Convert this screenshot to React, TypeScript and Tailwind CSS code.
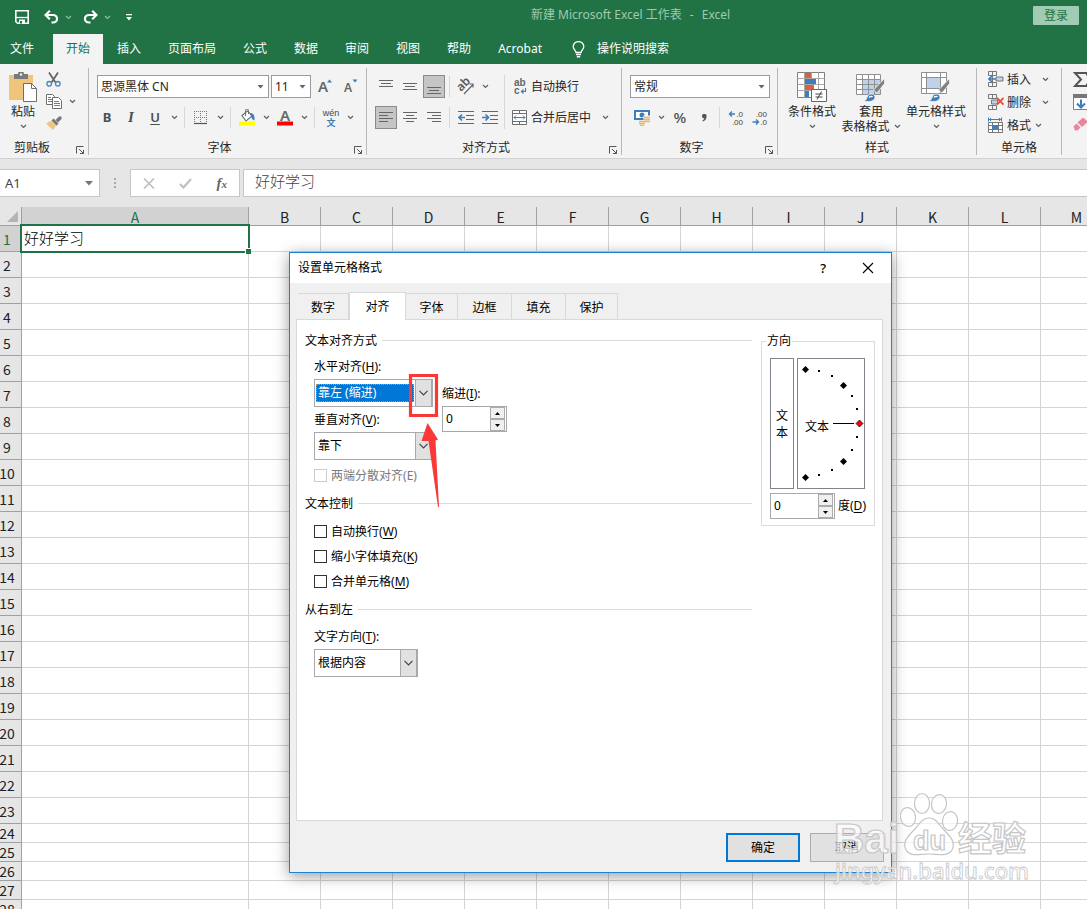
import React from 'react';

type Kids = { children?: React.ReactNode };

/* ---------- small shared pieces ---------- */

function Chevron({ color = '#5f5f5f' }: { color?: string }) {
  return (
    <svg width="7" height="5" viewBox="0 0 7 5" fill="none">
      <path d="M1 1l2.5 2.5L6 1" stroke={color} strokeWidth="1.2" />
    </svg>
  );
}

function Triangle({ color = '#666666' }: { color?: string }) {
  return (
    <svg width="7" height="4" viewBox="0 0 7 4">
      <path d="M0.5 0h6L3.5 3.6z" fill={color} />
    </svg>
  );
}

function DropButton({ label }: { label: string }) {
  return (
    <button aria-label={label} className="flex h-[22px] w-[14px] items-center justify-center">
      <Chevron />
    </button>
  );
}

function Tool({ label, active = false, children }: Kids & { label: string; active?: boolean }) {
  return (
    <button
      aria-label={label}
      className={
        active
          ? 'mx-px flex h-[23px] w-[22px] items-center justify-center border border-[#8a8a8a] bg-[#c5c5c5]'
          : 'flex h-[23px] w-6 items-center justify-center'
      }
    >
      {children}
    </button>
  );
}

function Rule() {
  return <span className="mr-1 ml-[3px] h-[21px] w-px bg-[#d8d8d8]" />;
}

function Launcher({ label }: { label: string }) {
  return (
    <button aria-label={label} className="flex h-[14px] w-4 items-end pl-1">
      <svg width="9" height="9" viewBox="0 0 9 9" fill="none" stroke="#555555">
        <path d="M0.5 7.500V0.500H7.500" />
        <path d="M3 3l4.500 4.500M7.500 4v3.500H4" />
      </svg>
    </button>
  );
}

function Group({
  title,
  launcher = true,
  width,
  labelPad = '',
  children,
}: Kids & { title: string; launcher?: boolean; width: string; labelPad?: string }) {
  return (
    <section className={`flex h-[87px] shrink-0 flex-col border-r border-[#b8b8b8] ${width}`}>
      <div className="h-[73px]">{children}</div>
      <div className="flex h-[14px] items-center">
        <h2 className={`flex-1 text-center text-[12px] leading-[14px] text-[#262626] ${labelPad}`}>{title}</h2>
        {launcher && <Launcher label={title} />}
      </div>
    </section>
  );
}

function RibbonSelect({ label, value, width }: { label: string; value: string; width: string }) {
  return (
    <div className={`flex h-[23px] items-center border border-[#9b9b9b] bg-white pr-1 ${width}`}>
      <select
        aria-label={label}
        className="h-[21px] min-w-0 flex-1 appearance-none bg-transparent pl-[3px] text-[12px] leading-[21px] text-[#262626] outline-none"
      >
        <option>{value}</option>
      </select>
      <Triangle />
    </div>
  );
}

/* ---------- title bar icons ---------- */

function SaveIcon() {
  return (
    <svg width="14" height="14" viewBox="0 0 14 14" fill="none">
      <path d="M0.800 0.800h12.400v12.400H2.500L0.800 11.500z" stroke="#fff" strokeWidth="1.600" />
      <path d="M1 7.500h12" stroke="#fff" strokeWidth="1.300" />
      <path d="M4 9.500h6V14H4z" fill="#fff" />
      <path d="M5 11h2v2.500H5z" fill="#217346" />
    </svg>
  );
}

function UndoIcon({ flip = false }: { flip?: boolean }) {
  return (
    <svg width="15" height="14" viewBox="0 0 15 14" fill="none">
      <g transform={flip ? 'translate(15 0) scale(-1 1)' : undefined}>
        <path d="M1.500 5H9a4 3.700 0 0 1 0 7.500H7.500" stroke="#fff" strokeWidth="2.200" />
        <path d="M5.800 0.800L1.600 5l4.200 4.200" stroke="#fff" strokeWidth="2.200" />
      </g>
    </svg>
  );
}

function BulbIcon() {
  return (
    <svg width="13" height="17" viewBox="0 0 13 17" fill="none" stroke="#fff">
      <path d="M4 11.500C4 9.500 1.200 8.500 1.200 5.600a5.300 5 0 0 1 10.600 0c0 2.900-2.800 3.900-2.800 5.900z" strokeWidth="1.300" />
      <path d="M4 13.500h5M4.800 15.800h3.400" strokeWidth="1.400" />
    </svg>
  );
}

/* ---------- ribbon icons ---------- */

function PasteIcon() {
  return (
    <svg width="28" height="30" viewBox="0 0 28 30">
      <path d="M0 3h24v25H0z" fill="#efc57b" />
      <path d="M5 2h4a3 3 0 0 1 6 0h4v5H5z" fill="#7a7a7a" />
      <circle cx="12" cy="2.500" r="1.200" fill="#f3f3f3" />
      <path d="M14.500 11.500h8l5 5v13h-13z" fill="#fff" stroke="#6e6e6e" />
      <path d="M22.500 11.500v5h5" fill="none" stroke="#6e6e6e" />
    </svg>
  );
}

function CutIcon() {
  return (
    <svg width="15" height="15" viewBox="0 0 15 15" fill="none">
      <path d="M3 0.500l6.500 10M12 0.500l-6.500 10" stroke="#666666" strokeWidth="1.800" />
      <circle cx="3.200" cy="11.800" r="2.300" stroke="#4a82bd" strokeWidth="1.300" />
      <circle cx="11.800" cy="11.800" r="2.300" stroke="#4a82bd" strokeWidth="1.300" />
    </svg>
  );
}

function CopyIcon() {
  return (
    <svg width="16" height="15" viewBox="0 0 16 15" fill="none">
      <path d="M0.500 0.500h6l2 2v8h-8z" fill="#fff" stroke="#6e6e6e" />
      <path d="M2 3.500h3M2 5.500h4M2 7.500h4" stroke="#4a82bd" />
      <path d="M6.500 3.500h6l3 3v8h-9z" fill="#fff" stroke="#6e6e6e" />
      <path d="M8 7.500h5M8 9.500h6M8 11.500h6" stroke="#4a82bd" />
    </svg>
  );
}

function BrushIcon() {
  return (
    <svg width="16" height="14" viewBox="0 0 16 14">
      <path d="M0 7.500l5-2.700 5 5L7 14z" fill="#efc57b" />
      <path d="M5.500 4.500l2-2 5 5-2 2.200z" fill="#777777" />
      <path d="M9.500 4L13 0.500h2.500V3L12 6.500z" fill="#777777" />
    </svg>
  );
}

function GrowIcon({ small = false }: { small?: boolean }) {
  return (
    <svg width="14" height="15" viewBox="0 0 14 15" className="overflow-visible">
      <text x="0" y="13" fontSize={small ? 12 : 15} className="font-['Noto_Sans']" fontWeight="600" fill="#666666">
        A
      </text>
      <path d={small ? 'M8.500 0.500h5L11 3.500z' : 'M9 3.500h5L11.500 0.500z'} fill="#3f7cbc" />
    </svg>
  );
}

function BorderIcon() {
  return (
    <svg width="14" height="14" viewBox="0 0 14 14" fill="none">
      <path d="M0 0.500h13M0 6.500h13M0.500 0v12M6.500 0v12M12.500 0v12" stroke="#777777" strokeDasharray="1 1" />
      <path d="M0 12.500h13" stroke="#555555" strokeWidth="1.200" />
    </svg>
  );
}

function FillIcon() {
  return (
    <svg width="17" height="17" viewBox="0 0 17 17" fill="none">
      <path d="M3 6.500l5.500-4.500 4.500 5-6 5z" fill="#fff" stroke="#6e6e6e" strokeWidth="1.100" />
      <path d="M6.500 7V1.500a1.500 1.500 0 0 1 3 0V5" stroke="#6e6e6e" />
      <path d="M11 4c3.500 0 4.800 2.500 4.500 7.500l-2.500-1.500z" fill="#3f7cbc" />
      <path d="M0 12.500h16v4H0z" fill="#ffff00" />
    </svg>
  );
}

function FontColorIcon() {
  return (
    <svg width="16" height="17" viewBox="0 0 16 17" className="overflow-visible">
      <path d="M0 12.500h16v4H0z" fill="#ff0000" />
      <text x="3" y="11.500" fontSize="15" fontWeight="600" className="font-['Noto_Sans']" fill="#666666">
        A
      </text>
    </svg>
  );
}

function PinyinIcon() {
  return (
    <svg width="18" height="18" viewBox="0 0 18 18" className="overflow-visible">
      <text x="9" y="6.500" textAnchor="middle" fontSize="9" className="font-['Liberation_Sans']" fill="#444444">
        wén
      </text>
      <text x="9" y="17" textAnchor="middle" fontSize="9" fontWeight="700" className="font-['Noto_Sans_CJK_SC']" fill="#3f7cbc">
        文
      </text>
    </svg>
  );
}

function LinesIcon({ d }: { d: string }) {
  return (
    <svg width="14" height="14" viewBox="0 0 14 14" fill="none">
      <path d={d} stroke="#666666" />
    </svg>
  );
}

function OrientIcon() {
  return (
    <svg width="18" height="17" viewBox="0 0 18 17" fill="none" className="overflow-visible">
      <text x="1" y="11" fontSize="12" fontWeight="600" transform="rotate(-45 6 9)" className="font-['Noto_Sans']" fill="#5a5a5a">
        ab
      </text>
      <path d="M7 16L16 6.500M12.500 6h3.500v3.500" stroke="#666666" strokeWidth="1.200" />
    </svg>
  );
}

function IndentIcon({ inward = false }: { inward?: boolean }) {
  return (
    <svg width="16" height="14" viewBox="0 0 16 14" fill="none">
      <path d="M0 0.500h16M8 4.500h8M8 8.500h8M0 12.500h16" stroke="#666666" />
      {inward ? (
        <path d="M0 6.500h6M3.500 3.500l3 3-3 3" stroke="#3f7cbc" strokeWidth="1.700" />
      ) : (
        <path d="M7 6.500H1M4 3.500l-3 3 3 3" stroke="#3f7cbc" strokeWidth="1.700" />
      )}
    </svg>
  );
}

function WrapIcon() {
  return (
    <svg width="14" height="16" viewBox="0 0 14 16" fill="none" className="overflow-visible">
      <text x="0" y="6.500" fontSize="10" fontWeight="700" className="font-['Liberation_Sans']" fill="#666666">
        ab
      </text>
      <text x="0" y="15" fontSize="10" fontWeight="700" className="font-['Liberation_Sans']" fill="#666666">
        c
      </text>
      <path d="M11.500 9v3.500H7.500M9.500 10.500l-2 2 2 2" stroke="#3f7cbc" strokeWidth="1.200" />
    </svg>
  );
}

function MergeIcon() {
  return (
    <svg width="15" height="15" viewBox="0 0 15 15" fill="none">
      <path d="M0.500 0.500h14v14h-14zM0.500 3.500h14M0.500 11.500h14M7.500 0.500v3M7.500 11.500v3" stroke="#6e6e6e" fill="#fff" />
      <path d="M2 7.500h11M4 5.500l-2 2 2 2M11 5.500l2 2-2 2" stroke="#3f7cbc" />
    </svg>
  );
}

function CurrencyIcon() {
  return (
    <svg width="17" height="16" viewBox="0 0 17 16" fill="none">
      <path d="M1 1h14v8H1z" fill="#fff" stroke="#3f7cbc" strokeWidth="2" />
      <circle cx="8" cy="5" r="2.500" fill="#3f7cbc" />
      <path d="M9.500 5.500h7v7h-4v3.500H4v-5h5.500z" fill="#f3f3f3" />
      <path d="M10 7.500h6M10 9.500h6M10 11.500h6M5 11.500h6M5 13.500h6M6 15.500h4" stroke="#e8b968" strokeWidth="1.500" />
    </svg>
  );
}

function DecimalIcon({ less = false }: { less?: boolean }) {
  return (
    <svg width="16" height="16" viewBox="0 0 16 16" fill="none" className="overflow-visible">
      <text x="15" y="6.500" textAnchor="end" fontSize="8" className="font-['Liberation_Sans']" fill="#444444">
        {less ? '.00' : '.0'}
      </text>
      <text x="15" y="15" textAnchor="end" fontSize="8" className="font-['Liberation_Sans']" fill="#444444">
        {less ? '.0' : '.00'}
      </text>
      {less ? (
        <path d="M0.500 12h6M4 9.500L6.500 12 4 14.500" stroke="#3f7cbc" strokeWidth="1.400" />
      ) : (
        <path d="M7 4H1.500M4 1.500L1.500 4 4 6.500" stroke="#3f7cbc" strokeWidth="1.400" />
      )}
    </svg>
  );
}

function ConditionalIcon() {
  return (
    <svg width="31" height="31" viewBox="0 0 31 31" fill="none">
      <path d="M0.500 0.500h27v25h-27z" fill="#fff" stroke="#808080" />
      <path d="M0.500 6.500h27M0.500 12.500h27M0.500 18.500h27M7.500 0.500v25M14.500 0.500v25M21.500 0.500v25" stroke="#a8a8a8" />
      <path d="M8 1h6v5H8zM8 13h9v5H8z" fill="#d8623f" />
      <path d="M8 7h11v5H8zM8 19h4v6H8z" fill="#3f7cbc" />
      <path d="M14.500 17.500h15v12h-15z" fill="#fff" stroke="#666666" />
      <path d="M18.500 22h7M18.500 25h7M24.500 19.500l-4.500 8" stroke="#444444" />
    </svg>
  );
}

function BrushOverlay() {
  return (
    <g>
      <path d="M28.500 6.500v5L21 21l-3.500-3z" fill="#808080" stroke="#f3f3f3" strokeWidth="0.800" />
      <path d="M8 29c3-1 2.500-3.500 4-5.500 2-2.700 7-1.500 7 1.500 0 4-5.500 5.500-11 4z" fill="#3f7cbc" stroke="#f3f3f3" strokeWidth="0.800" />
      <path d="M13 25.500c1.500-1.500 3-1.200 3.500-0.500" stroke="#fff" strokeWidth="1.300" fill="none" />
    </g>
  );
}

function TableStyleIcon() {
  return (
    <svg width="30" height="30" viewBox="0 0 30 30" fill="none">
      <path d="M0.500 2.500h24v20h-24z" fill="#fff" />
      <path d="M6 8h18v14H6z" fill="#bfd2e9" />
      <path d="M0.500 2.500h24v20h-24zM0.500 7.500h24M0.500 12.500h24M0.500 17.500h24M6.500 2.500v20M12.500 2.500v20M18.500 2.500v20" stroke="#909090" />
      <BrushOverlay />
    </svg>
  );
}

function CellStyleIcon() {
  return (
    <svg width="30" height="30" viewBox="0 0 30 30" fill="none">
      <path d="M0.500 0.500h25v21h-25z" fill="#fff" />
      <path d="M0.500 0.500h25v21h-25zM0.500 5.500h25M0.500 16.500h25M5.500 0.500v21M19.500 0.500v21" stroke="#909090" />
      <path d="M6 6h13v10H6z" fill="#bfd2e9" />
      <BrushOverlay />
    </svg>
  );
}

function InsertCellsIcon() {
  return (
    <svg width="16" height="17" viewBox="0 0 16 17" fill="none">
      <path d="M0.500 0.500h8v4h-8zM4.500 0.500v4M0.500 11.500h8v4h-8zM4.500 11.500v4M4.500 4.500v7" stroke="#777777" />
      <path d="M8 6h7v4H8z" fill="#bfd2e9" stroke="#777777" />
      <path d="M8 8H1M4 5L1 8l3 3" stroke="#3f7cbc" strokeWidth="1.700" />
    </svg>
  );
}

function DeleteCellsIcon() {
  return (
    <svg width="16" height="17" viewBox="0 0 16 17" fill="none">
      <path d="M0.500 0.500h8v4h-8zM4.500 0.500v4M0.500 11.500h8v4h-8zM4.500 11.500v4" stroke="#777777" />
      <path d="M3.500 6h6v4h-6z" fill="#bfd2e9" stroke="#777777" />
      <path d="M9 4l6.500 6.500M15.500 4L9 10.500" stroke="#e0533a" strokeWidth="1.800" />
    </svg>
  );
}

function FormatCellsIcon() {
  return (
    <svg width="16" height="17" viewBox="0 0 16 17" fill="none">
      <path d="M1 2.500h12M0.500 0.500v4M13.500 0.500v4M3 1L1.500 2.500 3 4M11 1l1.500 1.500L11 4" stroke="#3f7cbc" />
      <path d="M0.500 5.500h14v10h-14zM0.500 8.500h14M0.500 12.500h14M4.500 5.500v10M10.500 5.500v10" fill="#fff" stroke="#777777" />
      <path d="M4 8h6v4H4z" fill="#3f7cbc" />
    </svg>
  );
}

/* ---------- header ---------- */

const TABS = ['开始', '插入', '页面布局', '公式', '数据', '审阅', '视图', '帮助', 'Acrobat'];

function Header() {
  return (
    <header className="bg-[#217346] text-white">
      <div className="flex h-[34px] items-center pr-2 pl-[15px]">
        <button aria-label="保存" className="w-[29px]">
          <SaveIcon />
        </button>
        <button aria-label="撤消">
          <UndoIcon />
        </button>
        <button aria-label="撤消列表" className="ml-[6px] w-[18px]">
          <Chevron color="#8fbfa4" />
        </button>
        <button aria-label="恢复">
          <UndoIcon flip />
        </button>
        <button aria-label="恢复列表" className="ml-[6px] w-[22px]">
          <Chevron color="#8fbfa4" />
        </button>
        <button aria-label="自定义快速访问工具栏">
          <svg width="6" height="7" viewBox="0 0 6 7">
            <path d="M0 0h6v1.300H0zM0 3h6L3 6.500z" fill="#fff" />
          </svg>
        </button>
        <h1 className="flex flex-1 justify-center gap-2 pb-1 pl-[96px] text-[12px] leading-[18px] text-[#9dcbb0]">
          <span>新建 Microsoft Excel 工作表</span>
          <span>-</span>
          <span>Excel</span>
        </h1>
        <button className="mb-[3px] h-[19px] w-[46px] rounded-[1px] bg-[#9fccb2] text-[12px] leading-[18px] text-[#217346]">
          登录
        </button>
      </div>
      <nav className="flex h-[30px] items-stretch gap-px text-[12px] leading-[28px]">
        <button className="w-[52px] pr-2 text-center">文件</button>
        {TABS.map((t) => (
          <button key={t} className={t === '开始' ? 'bg-[#f3f3f3] px-[13px] text-[#217346]' : 'px-[13px]'}>
            {t}
          </button>
        ))}
        <button className="ml-4 flex items-center gap-3">
          <BulbIcon />
          操作说明搜索
        </button>
      </nav>
    </header>
  );
}

/* ---------- ribbon ---------- */

function BigButton({ icon, lines, width }: { icon: React.ReactNode; lines: [string, string?]; width: string }) {
  return (
    <button className={`flex flex-col items-center pt-1 text-[12px] leading-[15px] text-[#262626] ${width}`}>
      <span className="flex h-8 items-start">{icon}</span>
      <span className="whitespace-nowrap">{lines[0]}</span>
      <span className="flex h-[15px] items-center gap-1 whitespace-nowrap">
        {lines[1]}
        <Chevron />
      </span>
    </button>
  );
}

function CellAction({ icon, text, gap }: { icon: React.ReactNode; text: string; gap: string }) {
  return (
    <button className={`flex h-[23px] items-center text-[12px] leading-[22px] text-[#262626] ${gap}`}>
      <span className="flex items-center gap-[3px]">
        {icon}
        {text}
      </span>
      <Chevron />
    </button>
  );
}

function Ribbon() {
  return (
    <div className="flex h-[95px] items-start overflow-hidden border-b border-[#d2d2d2] bg-[#f3f3f3] pt-1">
      <Group title="剪贴板" width="w-[89px]" labelPad="pr-2">
        <div className="flex">
          <BigButton icon={<PasteIcon />} lines={['粘贴']} width="w-[46px]" />
          <div className="flex flex-col">
            <button aria-label="剪切" className="flex h-[22px] items-center">
              <CutIcon />
            </button>
            <div className="flex h-[22px] items-center">
              <button aria-label="复制" className="w-[19px]">
                <CopyIcon />
              </button>
              <DropButton label="复制选项" />
            </div>
            <button aria-label="格式刷" className="flex h-[22px] items-center">
              <BrushIcon />
            </button>
          </div>
        </div>
      </Group>

      <Group title="字体" width="w-[278px]">
        <div className="flex flex-col gap-2 pt-[7px]">
          <div className="flex items-center gap-[2px] pl-2">
            <RibbonSelect label="字体" value="思源黑体 CN" width="w-[172px]" />
            <RibbonSelect label="字号" value="11" width="w-[40px]" />
            <Tool label="增大字号">
              <GrowIcon />
            </Tool>
            <Tool label="减小字号">
              <GrowIcon small />
            </Tool>
          </div>
          <div className="flex items-center pl-[6px] text-[13px] text-[#505050]">
            <Tool label="加粗">
              <b>B</b>
            </Tool>
            <Tool label="倾斜">
              <i className="font-['Liberation_Serif'] text-[15px] font-bold">I</i>
            </Tool>
            <Tool label="下划线">
              <u className="font-semibold underline-offset-2">U</u>
            </Tool>
            <DropButton label="下划线样式" />
            <Rule />
            <Tool label="边框">
              <BorderIcon />
            </Tool>
            <DropButton label="边框选项" />
            <Rule />
            <Tool label="填充颜色">
              <FillIcon />
            </Tool>
            <DropButton label="填充颜色选项" />
            <Tool label="字体颜色">
              <FontColorIcon />
            </Tool>
            <DropButton label="字体颜色选项" />
            <Rule />
            <Tool label="拼音">
              <PinyinIcon />
            </Tool>
            <DropButton label="拼音选项" />
          </div>
        </div>
      </Group>

      <Group title="对齐方式" width="w-[255px]">
        <div className="flex pt-[7px] pl-[7px] text-[12px] text-[#262626]">
          <div className="flex flex-col gap-2">
            <div className="flex items-center">
              <Tool label="顶端对齐">
                <LinesIcon d="M0 0.500h14M2 3.500h10M0 6.500h14" />
              </Tool>
              <Tool label="垂直居中">
                <LinesIcon d="M0 3.500h14M2 6.500h10M0 9.500h14" />
              </Tool>
              <Tool label="底端对齐" active>
                <LinesIcon d="M0 7.500h14M2 10.500h10M0 13.500h14" />
              </Tool>
              <Rule />
              <Tool label="方向">
                <OrientIcon />
              </Tool>
              <DropButton label="方向选项" />
            </div>
            <div className="flex items-center">
              <Tool label="左对齐" active>
                <LinesIcon d="M0 1.500h14M0 4.500h9M0 7.500h14M0 10.500h9" />
              </Tool>
              <Tool label="居中">
                <LinesIcon d="M0 1.500h14M3 4.500h8M0 7.500h14M3 10.500h8" />
              </Tool>
              <Tool label="右对齐">
                <LinesIcon d="M0 1.500h14M5 4.500h9M0 7.500h14M5 10.500h9" />
              </Tool>
              <Rule />
              <Tool label="减少缩进量">
                <IndentIcon />
              </Tool>
              <Tool label="增加缩进量">
                <IndentIcon inward />
              </Tool>
            </div>
          </div>
          <span className="mr-[7px] ml-[2px] h-[54px] w-px bg-[#d8d8d8]" />
          <div className="flex flex-col gap-2">
            <button className="flex h-[23px] items-center gap-[3px] pl-[2px]">
              <WrapIcon />
              自动换行
            </button>
            <div className="flex h-[23px] items-center gap-[7px]">
              <button className="flex items-center gap-[4px]">
                <MergeIcon />
                合并后居中
              </button>
              <DropButton label="合并选项" />
            </div>
          </div>
        </div>
      </Group>

      <Group title="数字" width="w-[156px]">
        <div className="flex flex-col gap-2 pt-[7px] pl-2">
          <RibbonSelect label="数字格式" value="常规" width="w-[140px]" />
          <div className="flex items-center text-[#505050]">
            <Tool label="会计数字格式">
              <CurrencyIcon />
            </Tool>
            <DropButton label="会计数字格式选项" />
            <Tool label="百分比样式">
              <span className="text-[15px] font-medium">%</span>
            </Tool>
            <Tool label="千位分隔样式">
              <svg width="5" height="8" viewBox="0 0 5 8">
                <path d="M0 2.200A2.200 2.200 0 0 1 4.600 2C4.600 5 3 7 0.800 7.500L0.500 6.500C1.500 6 2.200 5.200 2.300 4.300 1 4.400 0 3.500 0 2.200z" fill="#555555" />
              </svg>
            </Tool>
            <Rule />
            <Tool label="增加小数位数">
              <DecimalIcon />
            </Tool>
            <Tool label="减少小数位数">
              <DecimalIcon less />
            </Tool>
          </div>
        </div>
      </Group>

      <Group title="样式" width="w-[199px]" launcher={false}>
        <div className="flex pl-[5px]">
          <BigButton icon={<ConditionalIcon />} lines={['条件格式']} width="w-[58px]" />
          <BigButton icon={<TableStyleIcon />} lines={['套用', '表格格式']} width="w-[60px]" />
          <BigButton icon={<CellStyleIcon />} lines={['单元格样式']} width="w-[70px]" />
        </div>
      </Group>

      <Group title="单元格" width="w-[85px]" launcher={false}>
        <div className="flex flex-col pl-[11px]">
          <CellAction icon={<InsertCellsIcon />} text="插入" gap="gap-[11px]" />
          <CellAction icon={<DeleteCellsIcon />} text="删除" gap="gap-[11px]" />
          <CellAction icon={<FormatCellsIcon />} text="格式" gap="gap-1" />
        </div>
      </Group>

      <div className="flex shrink-0 flex-col pl-[11px]">
        <button aria-label="自动求和" className="flex h-[22px] items-center">
          <svg width="16" height="15" viewBox="0 0 16 15" fill="none">
            <path d="M14 3.500V1H2l6 6.500L2 14h12v-2.500" stroke="#555555" strokeWidth="2" />
          </svg>
        </button>
        <button aria-label="填充" className="flex h-[24px] items-center">
          <svg width="16" height="16" viewBox="0 0 16 16" fill="none">
            <path d="M0.500 0.500h15v15H0.500z" fill="#fff" stroke="#808080" />
            <path d="M0 0h16v4H0z" fill="#777777" />
            <path d="M8 5.500v8M4 9.500l4 4 4-4" stroke="#3f7cbc" strokeWidth="2" />
          </svg>
        </button>
        <button aria-label="清除" className="flex h-[20px] items-center">
          <svg width="16" height="14" viewBox="0 0 16 14">
            <path d="M0.500 9.500l3-3 4 4-3 3H2z" fill="#e8879c" />
            <path d="M4.500 5.500L10 0.500l5 4-6 5.500z" fill="#e8879c" />
          </svg>
        </button>
      </div>
    </div>
  );
}

/* ---------- formula bar ---------- */

function FormulaBar() {
  return (
    <div className="flex h-[48px] items-start bg-[#e6e6e6] pt-[10px]">
      <div className="flex h-[28px] w-[100px] items-center border border-l-0 border-[#c6c6c6] bg-white pr-[6px]">
        <input
          aria-label="名称框"
          defaultValue="A1"
          className="min-w-0 flex-1 bg-transparent pt-[2px] pl-[5px] text-[13px] text-[#444444] outline-none"
        />
        <svg width="8" height="5" viewBox="0 0 8 5">
          <path d="M0 0h8L4 4.500z" fill="#777777" />
        </svg>
      </div>
      <span className="flex h-[28px] w-[30px] items-center justify-center">
        <svg width="2" height="10" viewBox="0 0 2 10" fill="#a8a8a8">
          <path d="M0 0h2v2H0zM0 4h2v2H0zM0 8h2v2H0z" />
        </svg>
      </span>
      <div className="flex h-[28px] w-[110px] items-center justify-around border border-[#c6c6c6] bg-white">
        <button aria-label="取消">
          <svg width="12" height="11" viewBox="0 0 12 11" fill="none">
            <path d="M1 0.500l10 10M11 0.500l-10 10" stroke="#c0c0c0" strokeWidth="1.700" />
          </svg>
        </button>
        <button aria-label="输入">
          <svg width="13" height="11" viewBox="0 0 13 11" fill="none">
            <path d="M1 6l3.500 3.500L12 1" stroke="#c0c0c0" strokeWidth="2.200" />
          </svg>
        </button>
        <button aria-label="插入函数" className="font-['Liberation_Serif'] text-[15px] leading-4 font-bold text-[#666666] italic">
          f<span className="text-[11px]">x</span>
        </button>
      </div>
      <input
        aria-label="编辑栏"
        defaultValue="好好学习"
        className="ml-[3px] h-[28px] min-w-0 flex-1 border border-r-0 border-[#c6c6c6] bg-white pb-[5px] pl-[11px] font-['Noto_Sans_CJK_SC',sans-serif] text-[15px] font-light text-[#444444] outline-none"
      />
    </div>
  );
}

/* ---------- sheet ---------- */

const COLUMNS = ['A', 'B', 'C', 'D', 'E', 'F', 'G', 'H', 'I', 'J', 'K', 'L', 'M'];
const ROWS = Array.from({ length: 28 }, (_, i) => i + 1);

function Sheet() {
  return (
    <div className="flex-1 overflow-hidden bg-white">
      <table className="w-[1113px] table-fixed border-separate border-spacing-0 font-['Noto_Sans_CJK_SC',sans-serif]">
        <colgroup>
          <col className="w-[22px]" />
          {COLUMNS.map((c) => (
            <col key={c} className={c === 'A' ? 'w-[227px]' : 'w-[72px]'} />
          ))}
        </colgroup>
        <thead>
          <tr className="h-[19px] text-[14px] leading-4">
            <th className="border-r border-b border-[#a0a0a0] bg-[#e6e6e6] p-0">
              <svg width="11" height="11" viewBox="0 0 11 11" className="ml-[7px]">
                <path d="M11 0v11H0z" fill="#b4b4b4" />
              </svg>
            </th>
            {COLUMNS.map((c) => (
              <th
                key={c}
                className={
                  c === 'A'
                    ? 'border-r border-b border-[#a0a0a0] bg-[#d2d2d2] p-0 pt-[2px] font-normal text-[#217346]'
                    : 'border-r border-b border-[#a0a0a0] bg-[#e6e6e6] p-0 pt-[2px] font-normal text-[#222222]'
                }
              >
                {c}
              </th>
            ))}
          </tr>
        </thead>
        <tbody>
          {ROWS.map((r) => (
            <tr key={r} className={r < 24 ? 'h-[26px]' : 'h-[19px]'}>
              <th
                className={
                  r === 1
                    ? 'border-r border-b border-[#a0a0a0] bg-[#d2d2d2] p-0 pr-[7px] text-[14px] leading-[18px] font-normal text-[#217346]'
                    : 'border-r border-b border-[#a0a0a0] bg-[#e6e6e6] p-0 pr-[7px] text-[14px] leading-[18px] font-normal text-[#222222]'
                }
              >
                <span className="flex justify-center">{r}</span>
              </th>
              {COLUMNS.map((c) =>
                r === 1 && c === 'A' ? (
                  <td key={c} className="relative p-0 pb-[2px] pl-[2px] text-[15px] leading-[22px] font-light text-black">
                    好好学习
                    <span className="absolute -top-[2px] -right-px -bottom-px -left-[2px] border-2 border-[#217346]" />
                    <span className="absolute -right-[2px] -bottom-[2px] size-[6px] border-t border-l border-white bg-[#217346]" />
                  </td>
                ) : (
                  <td key={c} className="border-r border-b border-[#d4d4d4] p-0" />
                ),
              )}
            </tr>
          ))}
        </tbody>
      </table>
    </div>
  );
}

/* ---------- dialog ---------- */

function Key({ children }: Kids) {
  return <span className="underline underline-offset-2">{children}</span>;
}

function Heading({ children, top = '' }: Kids & { top?: string }) {
  return (
    <div className={`flex h-5 items-center gap-[5px] ${top}`}>
      <h3>{children}</h3>
      <span className="mb-px h-px flex-1 bg-[#dcdcdc]" />
    </div>
  );
}

function Combo({ id, value, width, active = false }: { id: string; value: string; width: string; active?: boolean }) {
  return (
    <div className={`flex h-7 items-center border border-[#a9a9ad] bg-white ${width}`}>
      <select
        id={id}
        className={
          active
            ? 'mr-px ml-px h-[18px] min-w-0 flex-1 appearance-none border border-dotted border-[#ff8728] bg-[#0078d7] pl-px text-[12px] leading-4 text-white outline-none'
            : 'h-[26px] min-w-0 flex-1 appearance-none pl-[3px] text-[12px] leading-[26px] outline-none'
        }
      >
        <option>{value}</option>
      </select>
      <span className="flex h-[26px] w-[17px] items-center justify-center border-r border-l border-[#a9a9ad] bg-[#e1e1e1]">
        <svg width="9" height="6" viewBox="0 0 9 6" fill="none">
          <path d="M0.500 0.800l4 4 4-4" stroke="#444444" strokeWidth="1.200" />
        </svg>
      </span>
    </div>
  );
}

function Spinner({ id }: { id: string }) {
  const part = 'flex h-3 w-[15px] items-center justify-center border border-[#acacac] bg-[#f0f0f0]';
  return (
    <div className="flex h-[26px] w-[65px] items-center border border-[#a9a9ad] bg-white pr-px">
      <input id={id} defaultValue="0" className="h-6 min-w-0 flex-1 pb-[2px] pl-[3px] text-[12px] outline-none" />
      <span className="flex flex-col">
        <button aria-label="增加" className={part}>
          <svg width="5" height="3" viewBox="0 0 5 3">
            <path d="M0 3h5L2.500 0z" fill="#000" />
          </svg>
        </button>
        <button aria-label="减少" className={part}>
          <svg width="5" height="3" viewBox="0 0 5 3">
            <path d="M0 0h5L2.500 3z" fill="#000" />
          </svg>
        </button>
      </span>
    </div>
  );
}

function Tick({ text, k, underline = true, disabled = false }: { text: string; k: string; underline?: boolean; disabled?: boolean }) {
  return (
    <label className={disabled ? 'flex h-4 items-center gap-1 text-[#7a7a7a]' : 'flex h-4 items-center gap-1'}>
      <input
        type="checkbox"
        disabled={disabled}
        className={
          disabled
            ? 'size-[13px] appearance-none border border-[#cccccc] bg-white'
            : 'size-[13px] appearance-none border border-[#333333] bg-white'
        }
      />
      <span className="pt-px">
        {text}({underline ? <Key>{k}</Key> : k})
      </span>
    </label>
  );
}

const BIG_MARKS = [
  [8.5, 11.5],
  [46.5, 27.5],
  [46.5, 103.5],
  [8.5, 119.5],
];
const SMALL_MARKS = [
  [22, 13],
  [35, 18],
  [55, 38],
  [60, 51],
  [60, 79],
  [55, 92],
  [35, 112],
  [22, 117],
];

function Dial() {
  return (
    <div className="h-[131px] w-[68px] border border-[#82828c]">
      <svg width="66" height="129" viewBox="1 1 66 129">
        {BIG_MARKS.map(([x, y]) => (
          <path key={`${x}-${y}`} d={`M${x - 3.5} ${y}l3.500-3.500 3.500 3.500-3.500 3.500z`} fill="#000" />
        ))}
        {SMALL_MARKS.map(([x, y]) => (
          <rect key={`${x}-${y}`} x={x - 1} y={y - 1} width="2" height="2" fill="#000" />
        ))}
        <path d="M36 65.500h21" stroke="#000" />
        <path d="M59 65.500l3.500-3.500 3.500 3.500-3.500 3.500z" fill="#ff0000" stroke="#000" strokeWidth="0.700" />
        <text x="8" y="73" fontSize="12" fill="#000">
          文本
        </text>
      </svg>
    </div>
  );
}

const DIALOG_TABS = [
  { name: '数字', width: 'w-[51px]' },
  { name: '对齐', width: 'w-[57px]' },
  { name: '字体', width: 'w-[52px]' },
  { name: '边框', width: 'w-[54px]' },
  { name: '填充', width: 'w-[54px]' },
  { name: '保护', width: 'w-[52px]' },
];

function FormatDialog() {
  return (
    <div
      role="dialog"
      aria-label="设置单元格格式"
      className="absolute top-[252px] left-[289px] w-[603px] border border-[#1883d7] bg-[#f0f0f0] text-[12px] leading-4 text-black shadow-[0_3px_14px_rgba(0,0,0,0.4)]"
    >
      <div className="flex h-[30px] items-center bg-white pr-[17px] pb-px pl-2">
        <h2 className="flex-1 pt-px">设置单元格格式</h2>
        <button aria-label="帮助" className="mr-[36px] text-[13px] font-medium">
          ?
        </button>
        <button aria-label="关闭">
          <svg width="12" height="12" viewBox="0 0 12 12" fill="none">
            <path d="M1 1l10 10M11 1L1 11" stroke="#000" strokeWidth="1.100" />
          </svg>
        </button>
      </div>

      <div className="pt-[9px] pr-2 pl-[6px]">
        <div role="tablist" className="-mb-px flex items-end pl-[2px]">
          {DIALOG_TABS.map((t) => (
            <button
              key={t.name}
              role="tab"
              className={
                t.name === '对齐'
                  ? `h-7 border border-b-0 border-[#d9d9d9] bg-white ${t.width}`
                  : `mb-px h-[26px] border-t border-r border-[#d9d9d9] pt-[2px] ${t.width}`
              }
            >
              {t.name}
            </button>
          ))}
        </div>

        <div className="flex h-[502px] gap-[9px] border border-[#d9d9d9] bg-white pt-[11px] pr-[7px] pl-2">
          <div className="flex-1">
            <Heading>文本对齐方式</Heading>
            <div className="mt-2 flex gap-[9px] pl-[9px]">
              <div>
                <label htmlFor="h-align" className="block">
                  水平对齐(<Key>H</Key>):
                </label>
                <div className="mt-1">
                  <Combo id="h-align" value="靠左 (缩进)" width="w-[119px]" active />
                </div>
                <label htmlFor="v-align" className="mt-[5px] block">
                  垂直对齐(<Key>V</Key>):
                </label>
                <div className="mt-1">
                  <Combo id="v-align" value="靠下" width="w-[119px]" />
                </div>
              </div>
              <div className="pt-[27px]">
                <label htmlFor="indent" className="mb-1 block">
                  缩进(<Key>I</Key>):
                </label>
                <Spinner id="indent" />
              </div>
            </div>
            <div className="mt-[7px] pl-[9px]">
              <Tick text="两端分散对齐" k="E" underline={false} disabled />
            </div>

            <Heading top="mt-[11px]">文本控制</Heading>
            <div className="mt-[9px] flex flex-col gap-[9px] pl-[9px]">
              <Tick text="自动换行" k="W" />
              <Tick text="缩小字体填充" k="K" />
              <Tick text="合并单元格" k="M" />
            </div>

            <Heading top="mt-[11px]">从右到左</Heading>
            <div className="mt-[9px] pl-[9px]">
              <label htmlFor="direction" className="block">
                文字方向(<Key>T</Key>):
              </label>
              <div className="mt-1">
                <Combo id="direction" value="根据内容" width="w-[104px]" />
              </div>
            </div>
          </div>

          <fieldset className="h-[195px] w-[114px] border border-[#dcdcdc]">
            <legend className="ml-1 h-5 px-px leading-5">方向</legend>
            <div className="flex gap-[3px] px-2 pt-[7px]">
              <button className="flex h-[131px] w-6 items-center justify-center border border-[#82828c]">
                <span className="w-3 leading-[17px]">文本</span>
              </button>
              <Dial />
            </div>
            <div className="mt-1 flex items-center gap-[3px] pl-2">
              <Spinner id="degrees" />
              <label htmlFor="degrees">
                度(<Key>D</Key>)
              </label>
            </div>
          </fieldset>
        </div>
      </div>

      <div className="flex justify-end gap-[10px] pt-3 pr-[7px] pb-[10px]">
        <button className="h-[29px] w-[74px] border-2 border-[#0078d7] bg-[#e1e1e1] pt-px">确定</button>
        <button className="h-[29px] w-[74px] border border-[#adadad] bg-[#e1e1e1] pt-px">取消</button>
      </div>
    </div>
  );
}

/* ---------- marks that lie over the window ---------- */

function RedMarks() {
  return (
    <svg width="32" height="136" viewBox="0 0 32 136" className="pointer-events-none absolute top-[373px] left-[408px]" fill="none">
      <path d="M2.500 2.500h26v40h-26z" stroke="#fb3838" strokeWidth="3.200" />
      <path d="M19.500 50L30 66.500l-2.500 1L31 134h-1L20.500 68h-7z" fill="#fb3838" />
    </svg>
  );
}

function Watermark() {
  return (
    <svg
      width="204"
      height="98"
      viewBox="0 0 204 98"
      className="pointer-events-none absolute top-[790px] left-[830px] font-['Liberation_Sans','Noto_Sans_CJK_SC',sans-serif]"
      fill="#ffffff"
      fillOpacity="0.7"
      stroke="#c6c6c6"
      strokeWidth="1.200"
    >
      <ellipse cx="78" cy="27" rx="7.500" ry="9.500" transform="rotate(-10 78 27)" />
      <ellipse cx="92" cy="13.500" rx="7.500" ry="10" />
      <ellipse cx="109" cy="14" rx="7.500" ry="9.500" transform="rotate(8 109 14)" />
      <ellipse cx="120" cy="31" rx="7.500" ry="9.500" transform="rotate(8 120 31)" />
      <path d="M99 28c7 0 10 7 16 13 8 8 10 13 7 19-4 7-13 4-23 4s-19 3-23-4c-3-6-1-11 7-19 6-6 9-13 16-13z" />
      <text x="4" y="63" fontSize="42" fontWeight="700">
        Bai
      </text>
      <text x="83" y="60" fontSize="27" fontWeight="700">
        du
      </text>
      <text x="128" y="61" fontSize="34" fontWeight="700">
        经验
      </text>
      <text x="5" y="89" fontSize="22" fontWeight="500" strokeWidth="0.800" className="font-['Noto_Sans']">
        jingyan.baidu.com
      </text>
    </svg>
  );
}

export default function App() {
  return (
    <div className="relative flex h-screen flex-col overflow-hidden bg-white font-['Noto_Sans','Noto_Sans_CJK_SC',sans-serif]">
      <Header />
      <Ribbon />
      <FormulaBar />
      <Sheet />
      <FormatDialog />
      <RedMarks />
      <Watermark />
    </div>
  );
}
